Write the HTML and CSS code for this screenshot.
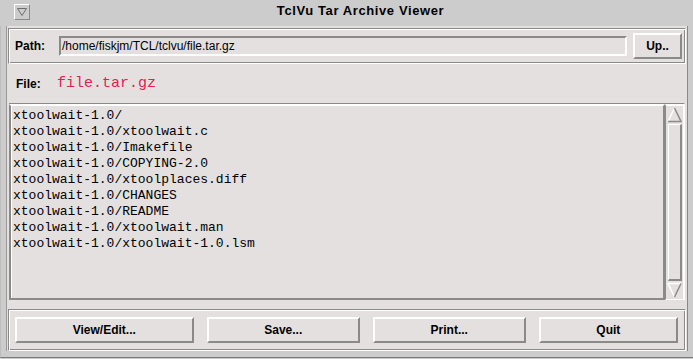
FILE: index.html
```html
<!DOCTYPE html>
<html lang="en">
<head>
    <meta charset="UTF-8">
    <title>TclVu Tar Archive Viewer</title>
    <link rel="stylesheet" href="styles.css">
</head>
<body>
    <div class="window">
        <div class="titlebar">
            <div class="menu-btn">
                <svg width="10" height="8" viewBox="0 0 10 8">
                    <path d="M0.5 0.5 L9.5 0.5 L5 7.5 Z" fill="none" stroke="#6e6e6e" stroke-width="1"/>
                </svg>
            </div>
            <div class="title">TclVu Tar Archive Viewer</div>
        </div>
        <div class="frame">
            <div class="content">
                <div class="group path-row">
                    <span class="label">Path:</span>
                    <div class="entry">/home/fiskjm/TCL/tclvu/file.tar.gz</div>
                    <button class="btn up-btn">Up..</button>
                </div>

                <div class="file-row">
                    <span class="label file-label">File:</span>
                    <span class="file-name">file.tar.gz</span>
                </div>

                <div class="listbox">
                    <div class="list-text">
                        <div>xtoolwait-1.0/</div>
                        <div>xtoolwait-1.0/xtoolwait.c</div>
                        <div>xtoolwait-1.0/Imakefile</div>
                        <div>xtoolwait-1.0/COPYING-2.0</div>
                        <div>xtoolwait-1.0/xtoolplaces.diff</div>
                        <div>xtoolwait-1.0/CHANGES</div>
                        <div>xtoolwait-1.0/README</div>
                        <div>xtoolwait-1.0/xtoolwait.man</div>
                        <div>xtoolwait-1.0/xtoolwait-1.0.lsm</div>
                    </div>
                    <div class="scrollbar">
                        <svg class="arrow" width="15" height="16" viewBox="0 0 15 16">
                            <path d="M7.5 1 L1 14.5" stroke="#fff" stroke-width="1.5" fill="none"/>
                            <path d="M7.5 1 L14 14.5 L1 14.5" stroke="#8a8a8a" stroke-width="1.5" fill="none"/>
                        </svg>
                        <div class="slider"></div>
                        <svg class="arrow" width="15" height="16" viewBox="0 0 15 16">
                            <path d="M14 1.5 L1 1.5 L7.5 15" stroke="#fff" stroke-width="1.5" fill="none"/>
                            <path d="M14 1.5 L7.5 15" stroke="#8a8a8a" stroke-width="1.5" fill="none"/>
                        </svg>
                    </div>
                </div>

                <div class="group button-row">
                    <button class="btn">View/Edit...</button>
                    <button class="btn">Save...</button>
                    <button class="btn">Print...</button>
                    <button class="btn">Quit</button>
                </div>
            </div>
        </div>
    </div>
</body>
</html>
```

FILE: styles.css
```css
body {
    margin: 0;
    padding: 0;
    background: #cccccc;
    font-family: 'Liberation Sans', Arial, sans-serif;
    font-size: 12px;
    color: #000;
}

.window {
    width: 693px;
    height: 359px;
    display: flex;
    flex-direction: column;
    background: #cccccc;
}

/* Title bar */
.titlebar {
    height: 26px;
    display: flex;
    align-items: flex-start;
    background: #cccccc;
}

.menu-btn {
    margin: 4px 0 0 14px;
    width: 14px;
    height: 14px;
    border-top: 1px solid #fff;
    border-left: 1px solid #fff;
    border-bottom: 1px solid #8a8a8a;
    border-right: 1px solid #8a8a8a;
    display: flex;
    justify-content: center;
    align-items: center;
}

.title {
    flex: 1;
    text-align: center;
    font-weight: bold;
    font-size: 13px;
    letter-spacing: 0.6px;
    line-height: 22px;
    padding-right: 2px;
}

/* Window frame */
.frame {
    flex: 1;
    display: flex;
    border-left: 1px solid #bdbdbd;
    padding-left: 5px;
    padding-right: 5px;
    padding-bottom: 6px;
    border-bottom: 1px solid #7a7a7a;
    margin-bottom: 1px;
}

.content {
    flex: 1;
    display: flex;
    flex-direction: column;
    background: #e4e0e0;
    border-left: 1px solid #999;
    border-right: 1px solid #888;
    padding: 2px 0 0 1px;
}

.group {
    border-top: 1px solid #8a8a8a;
    border-left: 1px solid #8a8a8a;
    border-bottom: 1px solid #fff;
    border-right: 1px solid #fff;
    box-shadow: inset 1px 1px #fff, inset -1px -1px #8a8a8a;
    margin-right: 1px;
}

.path-row {
    height: 36px;
    box-sizing: border-box;
    display: flex;
    align-items: center;
    padding: 0 3px 0 6px;
}

.label {
    font-weight: bold;
    width: 44px;
}

.entry {
    flex: 1;
    height: 20px;
    box-sizing: border-box;
    border-top: 2px solid #8a8a8a;
    border-left: 2px solid #8a8a8a;
    border-bottom: 2px solid #fff;
    border-right: 2px solid #fff;
    padding-left: 1px;
    line-height: 16px;
    font-size: 12px;
    margin-right: 6px;
}

.btn {
    font-family: 'Liberation Sans', Arial, sans-serif;
    font-weight: bold;
    font-size: 12px;
    background: #e4e0e0;
    color: #000;
    border-top: 2px solid #fff;
    border-left: 2px solid #fff;
    border-bottom: 2px solid #8a8a8a;
    border-right: 2px solid #8a8a8a;
    height: 26px;
    padding: 0;
    margin: 0;
}

.up-btn {
    width: 49px;
}

.file-row {
    height: 39px;
    display: flex;
    align-items: center;
    padding-left: 8px;
}

.file-label {
    width: 41px;
}

.file-name {
    font-family: 'Liberation Mono', 'DejaVu Sans Mono', monospace;
    font-size: 15px;
    color: #e5204e;
}

/* List with scrollbar */
.listbox {
    height: 197px;
    box-sizing: border-box;
    display: flex;
    margin: 0 2px 0 1px;
    border-top: 1px solid #8a8a8a;
    border-right: 1px solid #fff;
}

.list-text {
    flex: 1;
    border-top: 2px solid #fff;
    border-left: 2px solid #8a8a8a;
    border-bottom: 2px solid #8a8a8a;
    border-right: 2px solid #8a8a8a;
    box-shadow: inset 1px 0 #fff;
    padding: 2px 0 0 2px;
    font-family: 'Liberation Mono', 'DejaVu Sans Mono', monospace;
    font-size: 13px;
    line-height: 16px;
}

.scrollbar {
    width: 17px;
    display: flex;
    flex-direction: column;
    align-items: center;
    border-left: 1px solid #8a8a8a;
    border-right: 1px solid #fff;
    border-top: 2px solid #fff;
    border-bottom: 1px solid #fff;
    padding: 1px 0;
}

.slider {
    flex: 1;
    width: 11px;
    margin: 1px 0;
    border-left: 1px solid #fff;
    border-top: 1px solid #fff;
    border-right: 2px solid #8a8a8a;
    border-bottom: 2px solid #8a8a8a;
}

.button-row {
    margin-top: 9px;
    height: 42px;
    box-sizing: border-box;
    display: flex;
    align-items: center;
    gap: 13px;
    padding: 0 7px 0 6px;
}

.button-row .btn {
    flex: 1 1 auto;
}
```
